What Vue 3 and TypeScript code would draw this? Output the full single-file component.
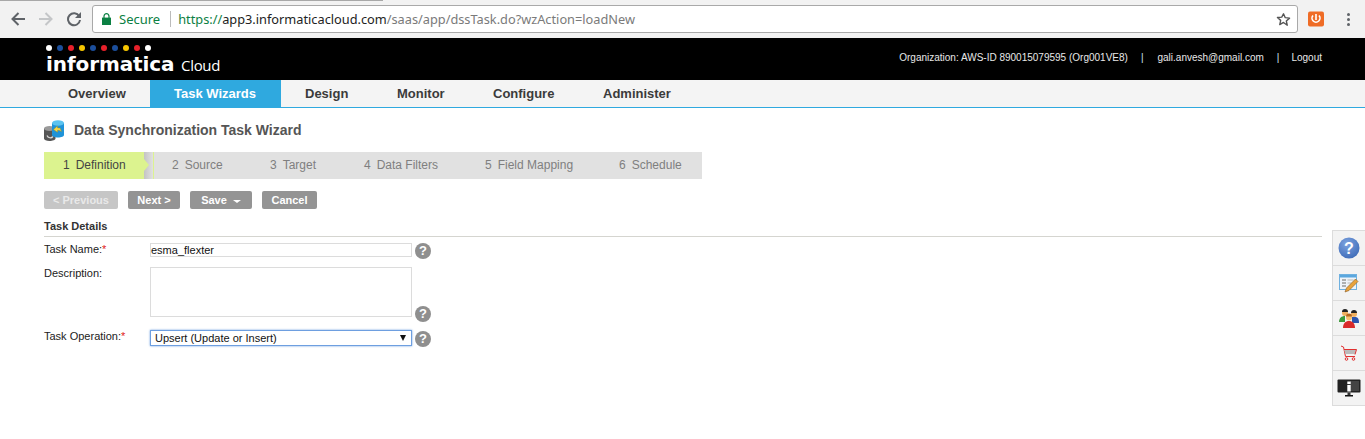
<script setup lang="ts">
const navItems = [
  { label: 'Overview', width: 106 },
  { label: 'Task Wizards', width: 131, active: true },
  { label: 'Design', width: 92 },
  { label: 'Monitor', width: 96 },
  { label: 'Configure', width: 110 },
  { label: 'Administer', width: 120 }
]
const steps = [
  { n: 1, label: 'Definition', width: 100, pad: 19 },
  { n: 2, label: 'Source', width: 98, pad: 28 },
  { n: 3, label: 'Target', width: 94, pad: 28 },
  { n: 4, label: 'Data Filters', width: 121, pad: 28 },
  { n: 5, label: 'Field Mapping', width: 134, pad: 28 },
  { n: 6, label: 'Schedule', width: 111, pad: 28 }
]
const dots = ['#fff', '#1c4f9c', '#e8202a', '#f7c600', '#1c4f9c', '#e8202a', '#1c4f9c', '#f7c600', '#e8202a', '#fff']
</script>

<template>
  <div class="page">
    <div class="browser">
      <div class="tabline"></div>
      <div class="toolbar">
        <svg class="tb-icon back" width="16" height="16" viewBox="0 0 16 16"><path d="M15 8H3M8.500 2L2.500 8l6 6" fill="none" stroke="#5f6368" stroke-width="2"/></svg>
        <svg class="tb-icon fwd" width="16" height="16" viewBox="0 0 16 16"><path d="M1 8h12M7.500 2l6 6-6 6" fill="none" stroke="#c4c6c8" stroke-width="2"/></svg>
        <svg class="tb-icon reload" width="16" height="16" viewBox="0 0 16 16"><path d="M13.200 5.200A6 6 0 1 0 14 9" fill="none" stroke="#5f6368" stroke-width="2"/><path d="M15 1v6H9z" fill="#5f6368"/></svg>
        <div class="omnibox">
          <svg class="lock" width="9" height="12" viewBox="0 0 9 12"><path d="M2 5V3.200a2.500 2.500 0 0 1 5 0V5" fill="none" stroke="#0b8043" stroke-width="1.200"/><rect y="4.600" width="9" height="7.400" fill="#0b8043"/></svg>
          <span class="secure">Secure</span>
          <span class="omni-sep"></span>
          <span class="url"><span class="scheme">https://</span><span class="host">app3.informaticacloud.com</span><span class="path">/saas/app/dssTask.do?wzAction=loadNew</span></span>
          <svg class="star" width="15" height="15" viewBox="0 0 24 24"><path d="M12 2.800l2.800 6.300 6.900.7-5.200 4.600 1.500 6.800L12 16.700l-6 3.500 1.500-6.800-5.200-4.600 6.900-.7z" fill="none" stroke="#555" stroke-width="2.200" stroke-linejoin="round"/></svg>
        </div>
        <div class="ext">
          <svg width="16" height="16" viewBox="0 0 16 16"><rect width="16" height="15" y=".5" rx="2" fill="#ef6c26"/><path d="M5 4.500a4 4 0 1 0 6 0" fill="none" stroke="#fff" stroke-width="1.600"/><path d="M8 3v6" stroke="#fff" stroke-width="1.600"/></svg>
        </div>
        <div class="kebab"><i></i><i></i><i></i></div>
      </div>
    </div>

    <header class="brand">
      <div class="logo">
        <div class="dots"><i v-for="(c, i) in dots" :key="i" :style="{ background: c }"></i></div>
        <div class="wordmark"><span class="inf">informatica</span><span class="cloud">Cloud</span></div>
      </div>
      <div class="account">
        <span>Organization: AWS-ID 890015079595 (Org001VE8)</span>
        <span class="bar">|</span>
        <span>gali.anvesh@gmail.com</span>
        <span class="bar last">|</span>
        <span>Logout</span>
      </div>
    </header>

    <nav class="nav">
      <a v-for="n in navItems" :key="n.label" :class="{ active: n.active }" :style="{ width: n.width + 'px' }">{{ n.label }}</a>
    </nav>

    <main class="content">
      <div class="title">
        <svg width="20" height="21" viewBox="0 0 20 21">
          <path d="M0 8.500v10c0 1.400 2.400 2.500 5.500 2.500s6-1.100 6-2.500v-10z" fill="#555"/>
          <ellipse cx="5.500" cy="8.500" rx="5.500" ry="2.400" fill="#9a9a9a"/>
          <path d="M3 15.500a3.500 3.500 0 0 0 6 1" fill="none" stroke="#ddd" stroke-width="1.200"/>
          <path d="M8 3v12c0 1.400 2.700 2.500 6 2.500s6-1.100 6-2.500V3z" fill="#1f93d8"/>
          <ellipse cx="14" cy="3" rx="6" ry="2.800" fill="#5cc3f0"/>
          <path d="M9.500 9.500l4-3.500v2h2.500l1.500 3.500-2.500-1.200h-1.500v2z" fill="#f6d84a" stroke="#a88a10" stroke-width=".4"/>
        </svg>
        <h1>Data Synchronization Task Wizard</h1>
      </div>

      <ol class="steps">
        <li v-for="s in steps" :key="s.n" :class="{ current: s.n === 1 }" :style="{ width: s.width + 'px', paddingLeft: s.pad + 'px' }">
          <span class="num">{{ s.n }}</span>{{ s.label }}
        </li>
      </ol>

      <div class="buttons">
        <button class="btn off">&lt; Previous</button>
        <button class="btn next">Next &gt;</button>
        <button class="btn save">Save <i class="caret"></i></button>
        <button class="btn cancel">Cancel</button>
      </div>

      <section class="details">
        <h2>Task Details</h2>
        <div class="form">
          <div class="row r-name">
            <label>Task Name:<em>*</em></label>
            <div class="field input">esma_flexter</div>
            <span class="help">?</span>
          </div>
          <div class="row r-desc">
            <label>Description:</label>
            <div class="field area"></div>
            <span class="help">?</span>
          </div>
          <div class="row r-op">
            <label>Task Operation:<em>*</em></label>
            <div class="field select">Upsert (Update or Insert)<span class="arrow"></span></div>
            <span class="help">?</span>
          </div>
        </div>
      </section>
    </main>

    <aside class="side">
      <div class="side-item">
        <svg width="22" height="22" viewBox="0 0 22 22"><defs><radialGradient id="hb" cx=".4" cy=".3" r=".8"><stop offset="0" stop-color="#7da3e0"/><stop offset="1" stop-color="#3b68b5"/></radialGradient></defs><circle cx="11" cy="11" r="10.500" fill="url(#hb)"/><text x="11" y="17" text-anchor="middle" class="q">?</text></svg>
      </div>
      <div class="side-item">
        <svg width="20" height="20" viewBox="0 0 20 20"><rect x=".5" y="1.500" width="17" height="15" fill="#eef4fa" stroke="#6fb1e0"/><rect x="1" y="2" width="16" height="2.500" fill="#5ba7de"/><path d="M3 7h4M3 10h4M3 13h4" stroke="#999" stroke-width="1.500"/><path d="M8.500 7h6M8.500 10h4" stroke="#ccc" stroke-width="1.500"/><path d="M6 19l1.500-4L16.500 6l2.500 2.500-9 9z" fill="#e8a33c" stroke="#8a5a20" stroke-width=".6"/></svg>
      </div>
      <div class="side-item">
        <svg width="22" height="20" viewBox="0 0 22 20"><circle cx="7" cy="5" r="3" fill="#f0b060"/><path d="M4 4a3 3 0 0 1 6 0z" fill="#222"/><path d="M1 14c0-4 2.500-6 6-6v6z" fill="#3c9a3c"/><circle cx="16" cy="6" r="3" fill="#f0b060"/><path d="M13 5a3 3 0 0 1 6 0z" fill="#222"/><path d="M14 9h3c3 0 4 2 4 6h-7z" fill="#2a55b0"/><circle cx="11" cy="9.500" r="3" fill="#f5c070"/><path d="M8 8.500a3 3 0 0 1 6 0z" fill="#b5651d"/><path d="M5 20c0-4.500 2.500-7 6-7s6 2.500 6 7z" fill="#d92b2b"/></svg>
      </div>
      <div class="side-item">
        <svg width="18" height="18" viewBox="0 0 18 18"><path d="M1 2l2.500 1 2 9.500h9.500" fill="none" stroke="#e03030" stroke-width="1"/><path d="M4 5.500l12.500-.5-1.500 5H5.300z" fill="#bbb"/><path d="M4 5.500h12.500l-1.500 5" fill="none" stroke="#e03030" stroke-width="1"/><circle cx="6.500" cy="15" r="1.300" fill="none" stroke="#e03030"/><circle cx="13.500" cy="15" r="1.300" fill="none" stroke="#e03030"/></svg>
      </div>
      <div class="side-item">
        <svg width="24" height="20" viewBox="0 0 24 20"><rect x=".5" y="1.500" width="23" height="13" rx="1" fill="#222"/><rect x="13" y="3" width="9" height="10" fill="#444"/><path d="M8 17h8v1.500H8z" fill="#111"/><path d="M10.500 14.500h3V17h-3z" fill="#333"/><rect x="10.300" y="3.500" width="3.400" height="2.600" fill="#fff"/><rect x="10.300" y="7" width="3.400" height="6.500" fill="#fff"/></svg>
      </div>
    </aside>
  </div>
</template>

<style>
html, body { margin: 0; background: #fff; }
</style>

<style scoped>
.page {
  position: relative;
  width: 1365px;
  height: 439px;
  overflow: hidden;
  background: #fff;
  font-family: "Liberation Sans", Arial, sans-serif;
}
.browser { height: 38px; background: #f2f2f2; display: flex; flex-direction: column; }
.tabline { height: 1px; width: 383px; background: #a8a8a8; flex: none; }
.toolbar { flex: 1; display: flex; align-items: center; padding: 0 0 1px 0; position: relative; }
.tb-icon { flex: none; }
.back { margin-left: 10px; }
.fwd { margin-left: 12px; }
.reload { margin-left: 12px; }
.omnibox {
  margin-left: 10px;
  width: 1206px;
  height: 28px;
  box-sizing: border-box;
  background: #fff;
  border: 1px solid #a9a9a9;
  border-radius: 3px;
  display: flex;
  align-items: center;
  padding-left: 9px;
  font-family: "Noto Sans", "Open Sans", sans-serif;
  font-size: 13px;
  flex: none;
}
.lock { flex: none; }
.secure { color: #0b8043; margin-left: 8px; font-size: 13px; }
.omni-sep { width: 1px; height: 16px; background: #bbb; margin: 0 7px 0 10px; }
.url { white-space: nowrap; flex: 1; font-size: 12.780px; }
.scheme { color: #0b8043; }
.host { color: #222; }
.path { color: #7a7a7a; }
.star { margin-right: 6px; flex: none; }
.ext { margin-left: 10px; width: 16px; height: 16px; }
.ext svg { display: block; }
.kebab { margin-left: 23px; display: flex; flex-direction: column; gap: 2px; }
.kebab i { display: block; width: 3px; height: 3px; border-radius: 50%; background: #5f6368; }

.brand {
  height: 42px;
  background: #000;
  display: flex;
  justify-content: space-between;
  padding: 0 43px 0 46px;
}
.logo { display: flex; flex-direction: column; padding-top: 7px; }
.dots { display: flex; gap: 5px; }
.dots i { display: block; width: 6px; height: 6px; border-radius: 50%; }
.wordmark { display: flex; align-items: baseline; margin-top: 2px; color: #fff; line-height: 23px; }
.inf { font-family: "DejaVu Sans", sans-serif; font-weight: 700; font-size: 20px; letter-spacing: -0.100px; width: 130px; white-space: nowrap; }
.cloud { margin-left: 5px; font-family: "Open Sans", sans-serif; font-size: 15px; letter-spacing: -0.300px; }
.account {
  display: flex;
  align-items: center;
  color: #e8e8e8;
  font-size: 10px;
  height: 38px;
}
.account .bar { margin: 0 14px 0 13px; color: #cfe3f2; }
.account .bar.last { margin-right: 12px; }

.nav {
  height: 27px;
  background: #f4f4f4;
  border-bottom: 1px solid #2fa9df;
  display: flex;
  padding-left: 44px;
}
.nav a {
  display: flex;
  align-items: center;
  padding-left: 24px;
  box-sizing: border-box;
  font-weight: 700;
  font-size: 13px;
  color: #3b3b3b;
}
.nav a.active { background: #2fa9df; color: #fff; }

.content { padding: 12px 43px 0 44px; }
.title { display: flex; align-items: center; height: 21px; gap: 10px; }
.title h1 { margin: -2px 0 0; font-size: 14px; font-weight: 700; color: #555; }
.steps {
  list-style: none;
  margin: 11px 0 0;
  padding: 0;
  width: 658px;
  height: 27px;
  display: flex;
  background: #e1e1e1;
  font-size: 12px;
  color: #7f7f7f;
}
.steps li { box-sizing: border-box; line-height: 27px; white-space: nowrap; }
.steps li.current { background: #dcf38f; color: #444; position: relative; }
.steps li.current::before {
  content: "";
  position: absolute;
  left: 100%;
  top: 0;
  width: 9px;
  height: 27px;
  background: linear-gradient(to right, #c4c4c4, #e1e1e1);
  border-right: 1px solid #dcf38f;
}
.steps li.current::after {
  content: "";
  position: absolute;
  left: 100%;
  top: 7px;
  border-left: 5px solid #dcf38f;
  border-top: 6px solid transparent;
  border-bottom: 6px solid transparent;
}
.num { margin-right: 6px; }
.buttons { display: flex; gap: 10px; margin-top: 12px; }
.btn {
  height: 18px;
  padding: 0;
  border: 0;
  border-radius: 2px;
  background: #949494;
  color: #fff;
  font: 700 11px "Liberation Sans", Arial, sans-serif;
  display: flex;
  align-items: center;
  justify-content: center;
}
.btn.off { background: #c6c6c6; color: #e9e9e9; width: 74px; }
.btn.next { width: 52px; }
.btn.save { width: 62px; }
.btn.cancel { width: 55px; }
.caret { display: inline-block; margin-left: 6px; margin-top: 2px; border-top: 3px solid #fff; border-left: 4px solid transparent; border-right: 4px solid transparent; }
.details { margin-top: 11px; }
.details h2 {
  margin: 0;
  font-size: 11px;
  font-weight: 700;
  color: #333;
  line-height: 12px;
  padding: 0 0 3px;
  border-bottom: 1px solid #d5d5d0;
  height: 13px;
  box-sizing: content-box;
}
.form { padding-top: 6px; display: flex; flex-direction: column; }
.row { display: flex; position: relative; }
.row label { width: 106px; flex: none; font-size: 11px; color: #222; line-height: 14px; margin-top: -1px; }
.row label em { color: #e02020; font-style: normal; }
.field { width: 262px; box-sizing: border-box; flex: none; border: 1px solid #dcdcdc; background: #fff; font-size: 11px; color: #111; }
.input { height: 14px; line-height: 12px; padding-left: 0; }
.area { height: 50px; }
.select {
  height: 16px;
  line-height: 14px;
  padding-left: 4px;
  border-color: #6e9fe0;
  box-shadow: 0 0 2px #6e9fe0;
  position: relative;
}
.arrow {
  position: absolute;
  right: 5px;
  top: 4px;
  border-top: 6px solid #111;
  border-left: 3px solid transparent;
  border-right: 3px solid transparent;
}
.help {
  width: 16px;
  height: 16px;
  border-radius: 50%;
  background: #8f8f8f;
  color: #fff;
  font-size: 13px;
  font-weight: 700;
  line-height: 16px;
  text-align: center;
  margin-left: 3px;
  flex: none;
}
.r-name { height: 24px; }
.r-desc { height: 63px; }
.r-desc .help { align-self: flex-end; margin-bottom: 8px; }
.r-op .help { margin-top: 1px; }
.side {
  position: absolute;
  right: 0;
  top: 230px;
  width: 32px;
  display: flex;
  flex-direction: column;
  gap: 1px;
  background: #dcdcdc;
  padding: 1px 0 1px 1px;
}
.side-item {
  height: 34px;
  background: #f3f3f3;
  display: flex;
  align-items: center;
  justify-content: center;
}
.side-item svg { display: block; }
.q { font: 700 16px "Liberation Sans", Arial, sans-serif; fill: #fff; }
</style>
